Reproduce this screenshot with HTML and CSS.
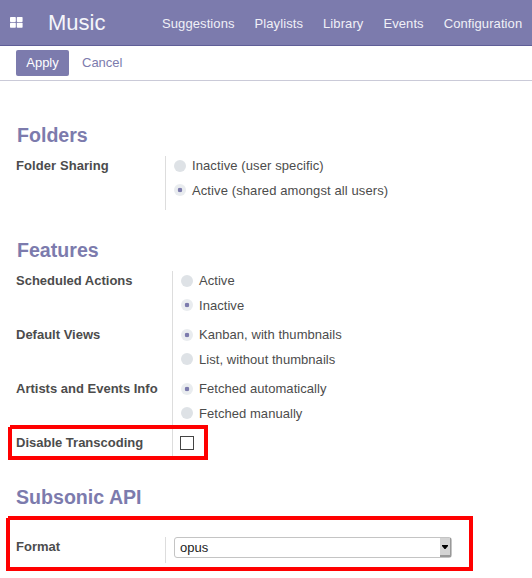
FILE: index.html
```html
<!DOCTYPE html>
<html lang="en">
<head>
<meta charset="utf-8">
<title>Music</title>
<link rel="stylesheet" href="styles.css">
</head>
<body>
<header class="navbar">
  <svg class="apps" width="13" height="11" viewBox="0 0 13 11"><g fill="#fff"><rect x="0" y="0" width="5.8" height="5" rx=".7"/><rect x="6.8" y="0" width="5.8" height="5" rx=".7"/><rect x="0" y="5.8" width="5.8" height="5" rx=".7"/><rect x="6.8" y="5.8" width="5.8" height="5" rx=".7"/></g></svg>
  <span class="brand">Music</span>
  <nav class="menu"><a>Suggestions</a><a>Playlists</a><a>Library</a><a>Events</a><a>Configuration</a></nav>
</header>
<div class="actions"><button class="apply">Apply</button><a class="cancel">Cancel</a></div>
<main>
  <section class="folders">
    <h2>Folders</h2>
    <div class="row tall">
      <div class="label">Folder Sharing</div>
      <div class="field">
        <div class="option"><i class="radio"></i><span>Inactive (user specific)</span></div>
        <div class="option"><i class="radio on"></i><span>Active (shared amongst all users)</span></div>
      </div>
    </div>
  </section>
  <section class="features">
    <h2>Features</h2>
    <div class="row">
      <div class="label">Scheduled Actions</div>
      <div class="field">
        <div class="option"><i class="radio"></i><span>Active</span></div>
        <div class="option"><i class="radio on"></i><span>Inactive</span></div>
      </div>
    </div>
    <div class="row">
      <div class="label">Default Views</div>
      <div class="field">
        <div class="option"><i class="radio on"></i><span>Kanban, with thumbnails</span></div>
        <div class="option"><i class="radio"></i><span>List, without thumbnails</span></div>
      </div>
    </div>
    <div class="row">
      <div class="label">Artists and Events Info</div>
      <div class="field">
        <div class="option"><i class="radio on"></i><span>Fetched automatically</span></div>
        <div class="option"><i class="radio"></i><span>Fetched manually</span></div>
      </div>
    </div>
    <div class="row last">
      <div class="label">Disable Transcoding</div>
      <div class="field"><i class="checkbox"></i></div>
    </div>
  </section>
  <section class="api">
    <h2>Subsonic API</h2>
    <div class="row format">
      <div class="label">Format</div>
      <div class="field"><div class="select"><span>opus</span><b class="arrow"><svg width="6" height="4" viewBox="0 0 6 4"><path d="M0 0h6v1L3.5 4h-1L0 1z" fill="#000"/></svg></b></div></div>
    </div>
  </section>
</main>
<div class="mark mark-transcoding"></div>
<div class="mark mark-format"></div>
</body>
</html>
```
FILE: styles.css
```css
* { box-sizing: border-box; }
body {
  margin: 0;
  height: 578px;
  position: relative;
  overflow: hidden;
  background: #fff;
  color: #4c4c4c;
  font: 13px/20px "Liberation Sans", Arial, sans-serif;
}
.navbar {
  display: flex;
  align-items: center;
  height: 46px;
  padding: 0 0 0 10px;
  background: #7c7bad;
  border-bottom: 1px solid #5f5e97;
  color: #fff;
}
.apps { flex: none; }
.brand { width: 114px; margin-left: 25px; font-size: 22px; line-height: 44px; color: #f5f5fa; }
.menu { display: flex; gap: 20px; padding-top: 2px; color: #f0f0f7; letter-spacing: .09px; white-space: nowrap; }
.actions {
  display: flex;
  align-items: center;
  gap: 13px;
  height: 35px;
  padding: 0 16px;
  border-bottom: 1px solid #cacad8;
}
.apply {
  width: 53px;
  height: 26px;
  padding: 0;
  border: 0;
  border-radius: 2px;
  background: #7c7bad;
  color: #fff;
  font: inherit;
}
.cancel { color: #7c7bad; }
main { padding: 42px 0 0 16px; }
h2 { margin: 0; padding-left: 1px; height: 33px; font-size: 19.6px; line-height: 24px; color: #7c7bad; }
.row { display: flex; height: 54px; }
.label { width: 149px; flex: none; font-weight: bold; white-space: nowrap; }
.field { flex: none; border-left: 1px solid #ddd; padding: 0 0 0 8px; }
.features .label { width: 156px; }
.folders { height: 115px; }
.folders .label { letter-spacing: .08px; }
.features { height: 247px; }
.features .row.last { height: 23px; }
.option { display: flex; align-items: center; height: 25px; padding-bottom: 5px; white-space: nowrap; letter-spacing: .05px; }
.folders .option { letter-spacing: .1px; }
.radio { width: 12px; height: 12px; margin-right: 6px; border-radius: 50%; background: #dee2e6; }
.radio.on { background: radial-gradient(circle, #7c7bad 0 2px, #e9ecef 2.6px); }
.option + .option .radio { position: relative; top: -1px; }
.checkbox { display: block; width: 14px; height: 14px; margin: 3px 0 0 -1px; border: 1px solid #444; }
.api h2 { padding-left: 0; height: 52px; }
.format { height: 26px; }
.select {
  display: flex;
  justify-content: space-between;
  width: 278px;
  height: 21px;
  padding-left: 5px;
  border: 1px solid #c4c4c4;
  border-radius: 3px;
  color: #222;
}
.arrow {
  display: flex;
  align-items: center;
  justify-content: center;
  width: 11px;
  height: 19px;
  background: #d4d4d4;
  border-right: 1px solid #999;
  border-bottom: 2px solid #999;
}
.mark { position: absolute; border: 4px solid #f00; }
.mark::before { content: ""; position: absolute; left: -4px; top: -4px; width: 2px; height: 2px; background: #fff; }
.mark-transcoding { left: 8px; top: 425px; width: 200px; height: 35px; }
.mark-format { left: 6px; top: 516px; width: 467px; height: 55px; }
```
